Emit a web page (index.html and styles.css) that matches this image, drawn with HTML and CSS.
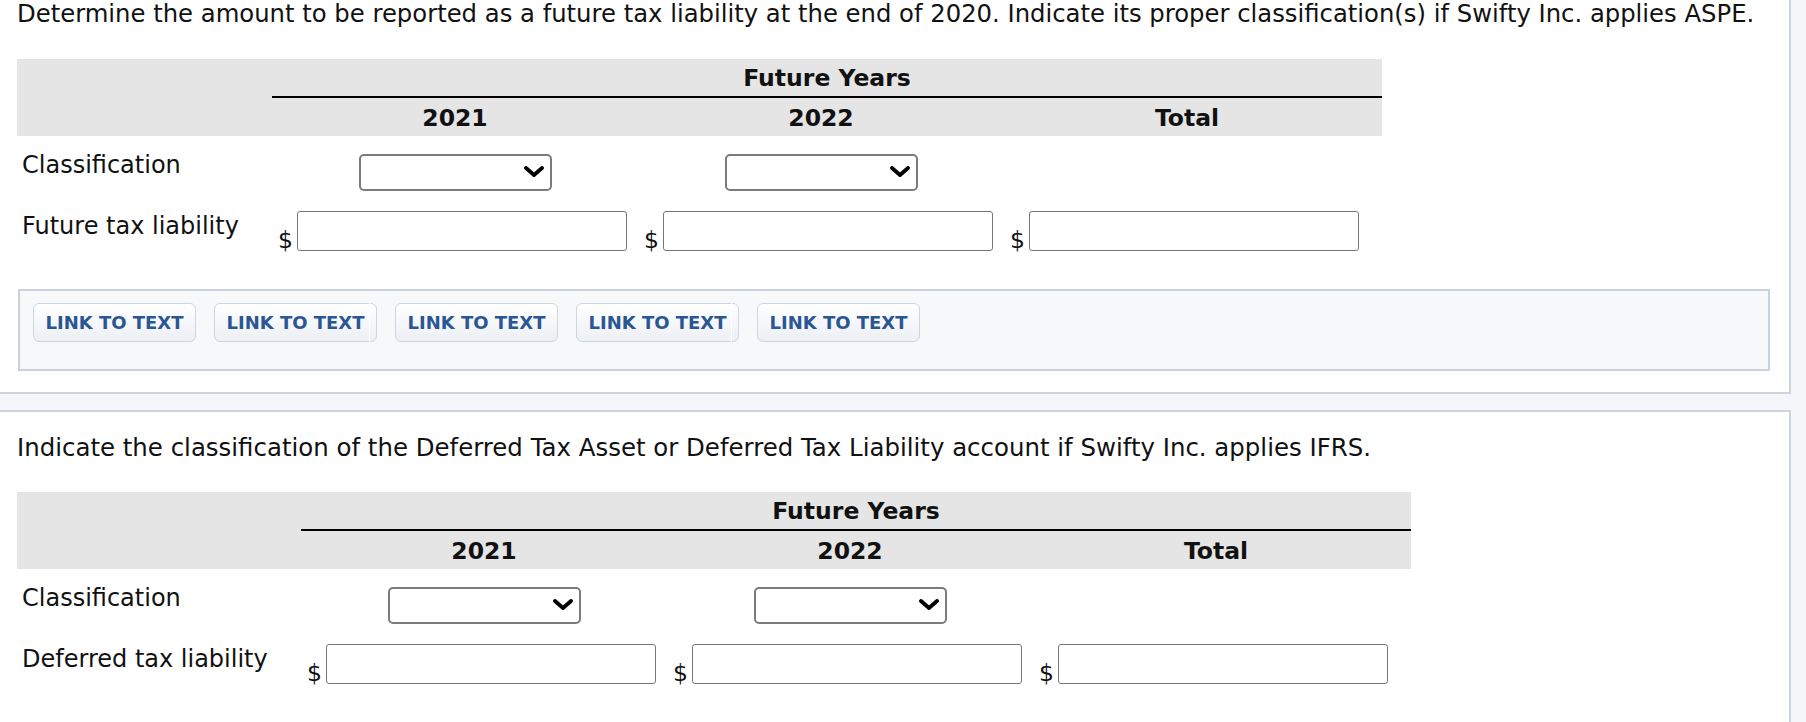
FILE: index.html
```html
<!DOCTYPE html>
<html lang="en">
<head>
<meta charset="utf-8">
<title>Future tax liability</title>
<link rel="stylesheet" href="styles.css">
</head>
<body>
<div class="page">
  <section class="panel panel-top">
    <p class="prompt">Determine the amount to be reported as a future tax liability at the end of 2020. Indicate its proper classification(s) if Swifty Inc. applies ASPE.</p>
    <div class="qgrid qgrid-a">
      <div class="h h-corner"></div>
      <div class="h h-group">Future Years</div>
      <div class="h h-col">2021</div>
      <div class="h h-col">2022</div>
      <div class="h h-col">Total</div>
      <div class="h h-tail"></div>

      <div class="c r-sel lbl">Classification</div>
      <div class="c r-sel csel">
        <div class="sel-wrap">
          <select aria-label="Classification 2021"><option></option></select>
          <svg class="chev" viewBox="0 0 20 11" aria-hidden="true"><polyline points="2,2 10,9 18,2" fill="none" stroke="#000" stroke-width="3.8" stroke-linecap="round" stroke-linejoin="round"/></svg>
        </div>
      </div>
      <div class="c r-sel csel">
        <div class="sel-wrap">
          <select aria-label="Classification 2022"><option></option></select>
          <svg class="chev" viewBox="0 0 20 11" aria-hidden="true"><polyline points="2,2 10,9 18,2" fill="none" stroke="#000" stroke-width="3.8" stroke-linecap="round" stroke-linejoin="round"/></svg>
        </div>
      </div>
      <div class="c r-sel"></div>
      <div class="c r-sel"></div>

      <div class="c r-amt lbl">Future tax liability</div>
      <div class="c r-amt money"><span class="dollar">$</span><input type="text" aria-label="2021"></div>
      <div class="c r-amt money"><span class="dollar">$</span><input type="text" aria-label="2022"></div>
      <div class="c r-amt money"><span class="dollar">$</span><input type="text" aria-label="Total"></div>
      <div class="c r-amt"></div>
    </div>

    <div class="links">
      <a class="btn">LINK TO TEXT</a>
      <a class="btn seam">LINK TO TEXT</a>
      <a class="btn">LINK TO TEXT</a>
      <a class="btn seam">LINK TO TEXT</a>
      <a class="btn">LINK TO TEXT</a>
    </div>
  </section>

  <section class="panel panel-bottom">
    <p class="prompt">Indicate the classification of the Deferred Tax Asset or Deferred Tax Liability account if Swifty Inc. applies IFRS.</p>
    <div class="qgrid qgrid-b">
      <div class="h h-corner"></div>
      <div class="h h-group">Future Years</div>
      <div class="h h-col">2021</div>
      <div class="h h-col">2022</div>
      <div class="h h-col">Total</div>
      <div class="h h-tail"></div>

      <div class="c r-sel lbl">Classification</div>
      <div class="c r-sel csel">
        <div class="sel-wrap">
          <select aria-label="Classification 2021"><option></option></select>
          <svg class="chev" viewBox="0 0 20 11" aria-hidden="true"><polyline points="2,2 10,9 18,2" fill="none" stroke="#000" stroke-width="3.8" stroke-linecap="round" stroke-linejoin="round"/></svg>
        </div>
      </div>
      <div class="c r-sel csel">
        <div class="sel-wrap">
          <select aria-label="Classification 2022"><option></option></select>
          <svg class="chev" viewBox="0 0 20 11" aria-hidden="true"><polyline points="2,2 10,9 18,2" fill="none" stroke="#000" stroke-width="3.8" stroke-linecap="round" stroke-linejoin="round"/></svg>
        </div>
      </div>
      <div class="c r-sel"></div>
      <div class="c r-sel"></div>

      <div class="c r-amt lbl">Deferred tax liability</div>
      <div class="c r-amt money"><span class="dollar">$</span><input type="text" aria-label="2021"></div>
      <div class="c r-amt money"><span class="dollar">$</span><input type="text" aria-label="2022"></div>
      <div class="c r-amt money"><span class="dollar">$</span><input type="text" aria-label="Total"></div>
      <div class="c r-amt"></div>
    </div>
  </section>
</div>
</body>
</html>
```
FILE: styles.css
```css
* {
  box-sizing: border-box;
}

html, body {
  margin: 0;
  padding: 0;
}

body {
  background: #f4f6f9;
  font-family: "DejaVu Sans", Verdana, sans-serif;
  font-size: 23.5px;
  color: #111;
  overflow: hidden;
}

.page {
  width: 1806px;
}

.panel {
  width: 1791px;
  background: #fff;
  border-right: 2px solid #cdd4de;
  padding-left: 17px;
}

.panel-top {
  border-bottom: 2px solid #cdd4de;
  padding-bottom: 21px;
}

.panel-bottom {
  margin-top: 16px;
  border-top: 2px solid #cdd4de;
  padding-top: 22px;
  padding-bottom: 80px;
}

.prompt {
  margin: 0 0 32px 0;
  font-size: 24.3px;
  line-height: 27px;
  white-space: nowrap;
}

.panel-bottom .prompt {
  margin-bottom: 31px;
  font-size: 24.45px;
}

/* question grid */
.qgrid {
  display: grid;
}

.qgrid-a {
  grid-template-columns: 255px repeat(3, 366px) 12px;
}

.qgrid-b {
  grid-template-columns: 284px repeat(3, 366px) 12px;
}

.h {
  background: #e5e5e5;
  font-weight: bold;
  line-height: 27px;
}

.h-corner {
  grid-row: span 2;
}

.h-group {
  grid-column: 2 / 6;
  height: 39px;
  padding-top: 1px;
  border-bottom: 2px solid #000;
  display: flex;
  align-items: center;
  justify-content: center;
}

.h-col {
  height: 38px;
  padding-top: 2px;
  display: flex;
  align-items: center;
  justify-content: center;
}

.h-tail {
  height: 38px;
}

.c {
  line-height: 27px;
}

.r-sel {
  padding-top: 18px;
  padding-bottom: 10px;
}

.r-amt {
  padding-top: 10px;
}

.lbl {
  padding-left: 5px;
  font-size: 24px;
  white-space: nowrap;
}

.r-sel.lbl {
  padding-top: 16px;
}

.r-amt.lbl {
  padding-top: 12px;
}

.csel {
  display: flex;
  justify-content: center;
}

.sel-wrap {
  position: relative;
  width: 193px;
  height: 37px;
}

.sel-wrap select {
  appearance: none;
  -webkit-appearance: none;
  display: block;
  width: 100%;
  height: 100%;
  margin: 0;
  border: 2px solid #7b7b7b;
  border-radius: 5px;
  background: #fff;
  font: inherit;
}

.chev {
  position: absolute;
  right: 8px;
  top: 12px;
  width: 20px;
  height: 11px;
  pointer-events: none;
}

.money {
  display: flex;
  align-items: flex-end;
  padding-left: 6px;
  gap: 4px;
}

.dollar {
  width: 15px;
  line-height: 22px;
}

.money input {
  display: block;
  width: 330px;
  height: 40px;
  margin: 0;
  border: 1px solid #767676;
  border-radius: 3px;
  background: #fff;
  font: inherit;
}

/* link buttons */
.links {
  margin-top: 38px;
  margin-left: 1px;
  width: 1752px;
  height: 82px;
  border: 2px solid #c9d1dc;
  background: #f7f8fa;
  padding: 12px 13px;
  display: flex;
  align-items: flex-start;
  gap: 18px;
}

.btn {
  position: relative;
  width: 163px;
  height: 39px;
  border: 1px solid #ccd5e0;
  border-radius: 6px;
  background: linear-gradient(#ffffff, #eceff4);
  color: #2b5694;
  font-family: "DejaVu Sans", Tahoma, sans-serif;
  font-weight: bold;
  font-size: 18px;
  display: flex;
  align-items: center;
  justify-content: center;
  white-space: nowrap;
  cursor: pointer;
}

.btn.seam::after {
  content: "";
  position: absolute;
  right: 6px;
  top: -1px;
  bottom: -1px;
  width: 1px;
  background: #fff;
}
```
